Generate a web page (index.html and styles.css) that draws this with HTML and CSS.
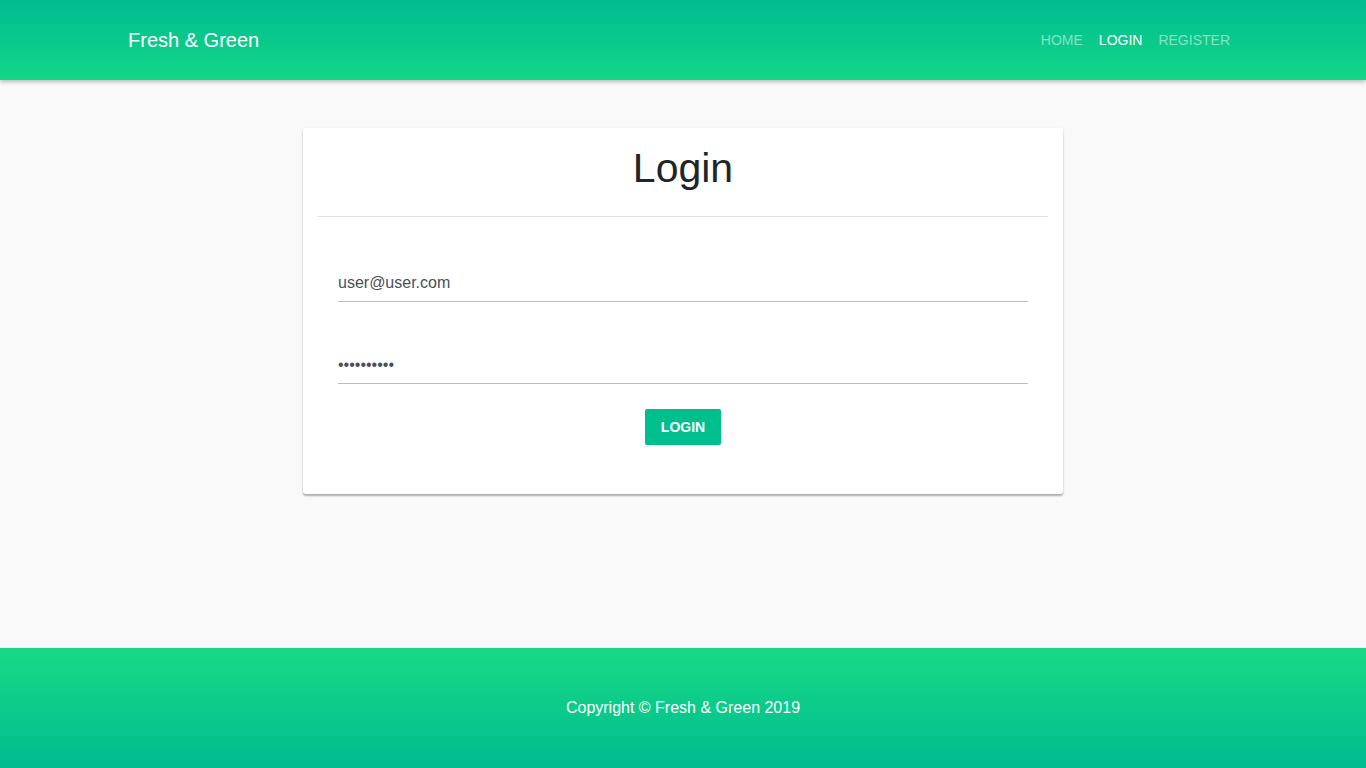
FILE: index.html
```html
<!DOCTYPE html>
<html lang="en">
<head>
<meta charset="utf-8">
<title>Fresh &amp; Green - Login</title>
<link rel="stylesheet" href="styles.css">
</head>
<body>
<header class="topbar">
  <div class="container topbar-inner">
    <a class="brand" href="#">Fresh &amp; Green</a>
    <nav class="nav">
      <a class="nav-link" href="#">HOME</a>
      <a class="nav-link active" href="#">LOGIN</a>
      <a class="nav-link" href="#">REGISTER</a>
    </nav>
  </div>
</header>
<main class="main">
  <section class="card">
    <h1 class="card-title">Login</h1>
    <hr class="divider">
    <form class="form">
      <div class="field"><input class="input" type="email" value="user@user.com"></div>
      <div class="field"><input class="input" type="password" value="1234567890"></div>
      <div class="actions"><button class="btn" type="button">LOGIN</button></div>
    </form>
  </section>
</main>
<footer class="footer">
  <p class="copy">Copyright © Fresh &amp; Green 2019</p>
</footer>
</body>
</html>
```
FILE: styles.css
```css
* { box-sizing: border-box; }
html, body { margin: 0; padding: 0; }
body {
  font-family: "Liberation Sans", Arial, sans-serif;
  background: #f9f9f9;
  color: #212529;
  min-height: 768px;
  display: flex;
  flex-direction: column;
}
.container {
  width: 1140px;
  margin: 0 auto;
  padding: 0 15px;
}
.topbar {
  height: 80px;
  background: linear-gradient(to bottom, #00bc8f, #13d688);
  box-shadow: 0 2px 4px rgba(0,0,0,0.25);
  position: relative;
  z-index: 1;
}
.topbar-inner {
  height: 80px;
  display: flex;
  align-items: center;
  justify-content: space-between;
}
.brand {
  color: #fff;
  text-decoration: none;
  font-size: 20px;
}
.nav { display: flex; }
.nav-link {
  color: rgba(255,255,255,0.5);
  text-decoration: none;
  font-size: 14px;
  padding: 0 8px;
}
.nav-link.active { color: #fff; }
.main {
  flex: 1;
  padding-top: 48px;
}
.card {
  width: 760px;
  margin: 0 auto;
  background: #fff;
  border-radius: 3px;
  box-shadow: 0 2px 2px rgba(0,0,0,0.3), 0 0 2px rgba(0,0,0,0.06);
  padding: 15px 15px 49px;
}
.card-title {
  margin: 1px 0 0;
  text-align: center;
  font-weight: 400;
  font-size: 41px;
  line-height: 48px;
  color: #212529;
}
.divider {
  border: 0;
  border-top: 1px solid #e0e0e0;
  margin: 24px 0 0;
}
.form { padding: 0 20px; }
.field { padding-top: 49px; }
.field + .field { padding-top: 46px; }
.input {
  display: block;
  width: 100%;
  border: 0;
  border-bottom: 1px solid #bdbdbd;
  background: transparent;
  font-family: "Liberation Sans", Arial, sans-serif;
  font-size: 16px;
  color: #495057;
  padding: 6px 0 7px;
  height: 36px;
  outline: none;
}
.actions {
  display: flex;
  justify-content: center;
  padding-top: 25px;
}
.btn {
  width: 76px;
  height: 36px;
  background: #00bf8f;
  color: #fff;
  border: 0;
  border-radius: 2px;
  font-family: "Liberation Sans", Arial, sans-serif;
  font-size: 14px;
  font-weight: 700;
}
.footer {
  height: 120px;
  background: linear-gradient(to bottom, #17d986, #00bc8f);
  display: flex;
  align-items: center;
  justify-content: center;
}
.copy {
  margin: 0;
  color: #fff;
  font-size: 16px;
}
```
